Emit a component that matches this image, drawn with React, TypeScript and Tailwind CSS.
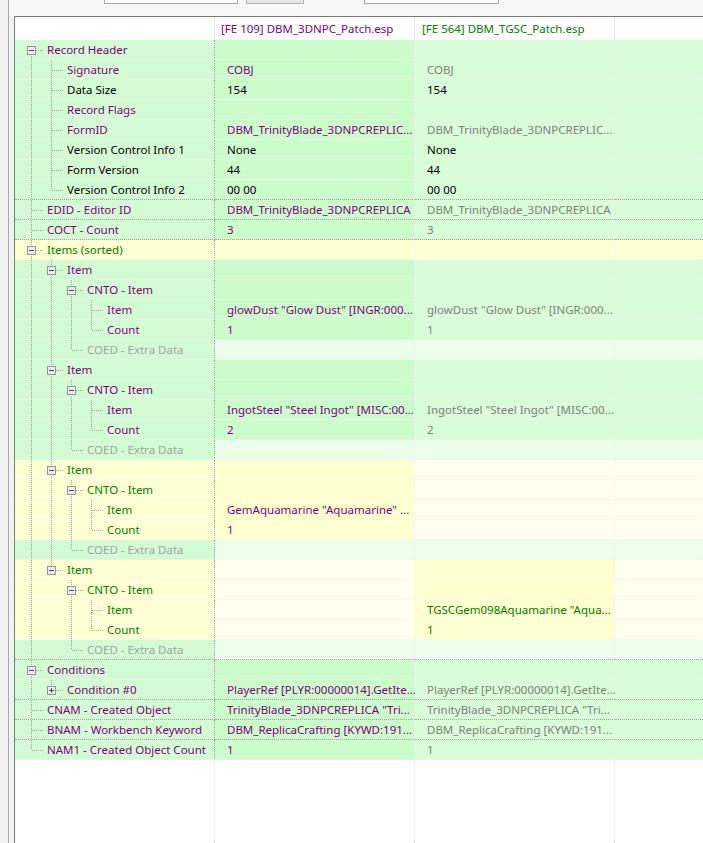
import React from 'react';

type Tone = 'p' | 'k' | 'g' | 'n' | 's';
type Band = 'G' | 'Y' | 'E' | 'Y2' | 'Y3';

interface Row {
  label: string;
  level: number;
  box?: 'minus' | 'plus';
  tone: Tone;
  band: Band;
  a?: string;
  at?: Tone;
  b?: string;
  bt?: Tone;
}

const TONE: Record<Tone, string> = {
  p: 'text-[#800080]',
  k: 'text-black',
  g: 'text-[#808080]',
  n: 'text-[#008000]',
  s: 'text-[#a3a3a3]',
};

// label, file 1, file 2, empty space on the right
const BAND: Record<Band, string[]> = {
  G: ['bg-[#d4fcd4]', 'bg-[#ccfccc]', 'bg-[#d8fdd8]', 'bg-[#d8fdd8]'],
  Y: ['bg-[#ffffd4]', 'bg-[#ffffd4]', 'bg-[#ffffd4]', 'bg-[#ffffd4]'],
  E: ['bg-[#d4fcd4]', 'bg-[#eafeea]', 'bg-[#eafeea]', 'bg-[#eafeea]'],
  Y2: ['bg-[#ffffd4]', 'bg-[#ffffd0]', 'bg-[#fffff0]', 'bg-[#fffff0]'],
  Y3: ['bg-[#ffffd4]', 'bg-[#fffff0]', 'bg-[#ffffd0]', 'bg-[#fffff0]'],
};

const TRINITY = 'DBM_TrinityBlade_3DNPCREPLIC...';

const ROWS: Row[] = [
  { label: 'Record Header', level: 0, box: 'minus', tone: 'p', band: 'G' },
  { label: 'Signature', level: 1, tone: 'p', band: 'G', a: 'COBJ', at: 'p', b: 'COBJ', bt: 'g' },
  { label: 'Data Size', level: 1, tone: 'k', band: 'G', a: '154', at: 'k', b: '154', bt: 'k' },
  { label: 'Record Flags', level: 1, tone: 'p', band: 'G' },
  { label: 'FormID', level: 1, tone: 'p', band: 'G', a: TRINITY, at: 'p', b: TRINITY, bt: 'g' },
  { label: 'Version Control Info 1', level: 1, tone: 'k', band: 'G', a: 'None', at: 'k', b: 'None', bt: 'k' },
  { label: 'Form Version', level: 1, tone: 'k', band: 'G', a: '44', at: 'k', b: '44', bt: 'k' },
  { label: 'Version Control Info 2', level: 1, tone: 'k', band: 'G', a: '00 00', at: 'k', b: '00 00', bt: 'k' },
  { label: 'EDID - Editor ID', level: 0, tone: 'p', band: 'G', a: 'DBM_TrinityBlade_3DNPCREPLICA', at: 'p', b: 'DBM_TrinityBlade_3DNPCREPLICA', bt: 'g' },
  { label: 'COCT - Count', level: 0, tone: 'p', band: 'G', a: '3', at: 'p', b: '3', bt: 'g' },
  { label: 'Items (sorted)', level: 0, box: 'minus', tone: 'n', band: 'Y' },

  { label: 'Item', level: 1, box: 'minus', tone: 'p', band: 'G' },
  { label: 'CNTO - Item', level: 2, box: 'minus', tone: 'p', band: 'G' },
  { label: 'Item', level: 3, tone: 'p', band: 'G', a: 'glowDust "Glow Dust" [INGR:000...', at: 'p', b: 'glowDust "Glow Dust" [INGR:000...', bt: 'g' },
  { label: 'Count', level: 3, tone: 'p', band: 'G', a: '1', at: 'p', b: '1', bt: 'g' },
  { label: 'COED - Extra Data', level: 2, tone: 's', band: 'E' },

  { label: 'Item', level: 1, box: 'minus', tone: 'p', band: 'G' },
  { label: 'CNTO - Item', level: 2, box: 'minus', tone: 'p', band: 'G' },
  { label: 'Item', level: 3, tone: 'p', band: 'G', a: 'IngotSteel "Steel Ingot" [MISC:00...', at: 'p', b: 'IngotSteel "Steel Ingot" [MISC:00...', bt: 'g' },
  { label: 'Count', level: 3, tone: 'p', band: 'G', a: '2', at: 'p', b: '2', bt: 'g' },
  { label: 'COED - Extra Data', level: 2, tone: 's', band: 'E' },

  { label: 'Item', level: 1, box: 'minus', tone: 'n', band: 'Y2' },
  { label: 'CNTO - Item', level: 2, box: 'minus', tone: 'n', band: 'Y2' },
  { label: 'Item', level: 3, tone: 'n', band: 'Y2', a: 'GemAquamarine "Aquamarine" ...', at: 'p' },
  { label: 'Count', level: 3, tone: 'n', band: 'Y2', a: '1', at: 'p' },
  { label: 'COED - Extra Data', level: 2, tone: 's', band: 'E' },

  { label: 'Item', level: 1, box: 'minus', tone: 'n', band: 'Y3' },
  { label: 'CNTO - Item', level: 2, box: 'minus', tone: 'n', band: 'Y3' },
  { label: 'Item', level: 3, tone: 'n', band: 'Y3', b: 'TGSCGem098Aquamarine "Aqua...', bt: 'n' },
  { label: 'Count', level: 3, tone: 'n', band: 'Y3', b: '1', bt: 'n' },
  { label: 'COED - Extra Data', level: 2, tone: 's', band: 'E' },

  { label: 'Conditions', level: 0, box: 'minus', tone: 'p', band: 'G' },
  { label: 'Condition #0', level: 1, box: 'plus', tone: 'p', band: 'G', a: 'PlayerRef [PLYR:00000014].GetIte...', at: 'p', b: 'PlayerRef [PLYR:00000014].GetIte...', bt: 'g' },
  { label: 'CNAM - Created Object', level: 0, tone: 'p', band: 'G', a: 'TrinityBlade_3DNPCREPLICA "Tri...', at: 'p', b: 'TrinityBlade_3DNPCREPLICA "Tri...', bt: 'g' },
  { label: 'BNAM - Workbench Keyword', level: 0, tone: 'p', band: 'G', a: 'DBM_ReplicaCrafting [KYWD:191...', at: 'p', b: 'DBM_ReplicaCrafting [KYWD:191...', bt: 'g' },
  { label: 'NAM1 - Created Object Count', level: 0, tone: 'p', band: 'G', a: '1', at: 'p', b: '1', bt: 'g' },
];

const isLast = (idx: number) => {
  const L = ROWS[idx].level;
  for (let j = idx + 1; j < ROWS.length; j++) {
    if (ROWS[j].level < L) return true;
    if (ROWS[j].level === L) return false;
  }
  return true;
};

const DOT = '#a0a0a0';

const TreeLines: React.FC<{ level: number; box?: 'minus' | 'plus'; first: boolean; last: boolean; open: boolean[] }> = ({
  level,
  box,
  first,
  last,
  open,
}) => {
  const x = 16 + level * 20;
  const dot = { stroke: DOT, strokeDasharray: '1 1' };
  return (
    <svg width={32 + level * 20} height={19} className="shrink-0" shapeRendering="crispEdges">
      {open.map((o, a) =>
        o ? <line key={a} x1={16 + a * 20 + 0.5} y1={0} x2={16 + a * 20 + 0.5} y2={19} {...dot} /> : null
      )}
      {!first && <line x1={x + 0.5} y1={0} x2={x + 0.5} y2={10} {...dot} />}
      {!last && <line x1={x + 0.5} y1={10} x2={x + 0.5} y2={19} {...dot} />}
      <line x1={x + 1} y1={10.5} x2={x + 12} y2={10.5} {...dot} />
      {box && (
        <g>
          <rect x={x - 3.5} y={6.5} width={8} height={8} fill="#ececec" stroke="#959595" />
          <line x1={x - 2} y1={10.5} x2={x + 3} y2={10.5} stroke="#3b4a78" />
          {box === 'plus' && <line x1={x + 0.5} y1={8} x2={x + 0.5} y2={13} stroke="#3b4a78" />}
        </g>
      )}
    </svg>
  );
};

const Toolbar: React.FC = () => (
  <div className="h-[16px] flex items-start bg-[#f7f7f7] overflow-hidden">
    <div className="ml-[95px] w-[134px] h-[4px] bg-white border border-t-0 border-[#a8a8a8]" />
    <div className="ml-[8px] w-[58px] h-[4px] bg-[#e6e6e6] border border-t-0 border-[#b4b4b4]" />
    <div className="ml-[60px] w-[135px] h-[4px] bg-white border border-t-0 border-[#a8a8a8]" />
  </div>
);

const App: React.FC = () => {
  return (
    <div className="w-[703px] h-[843px] flex bg-[#f2f2f2] overflow-hidden text-[11.5px] font-['Noto_Sans',sans-serif]">
      {/* left splitter strip */}
      <div className="w-[8px] shrink-0 bg-[#f0f0f0]" />
      <div className="w-px shrink-0 bg-[#a9a9a9]" />

      <div className="flex-1 flex flex-col min-w-0">
        <Toolbar />
        <div className="flex-1 flex min-h-0">
          <div className="w-[5px] shrink-0" />
          <div className="flex-1 flex flex-col bg-white border-l border-t border-[#7a7a7a] min-w-0">
            {/* column headers */}
            <div className="h-[23px] flex shrink-0">
              <div className="w-[200px] shrink-0 border-r border-[#e5e5e5]" />
              <div className="w-[200px] shrink-0 border-r border-[#e5e5e5] pl-[6px] flex items-center text-[#800080] whitespace-nowrap">
                [FE 109] DBM_3DNPC_Patch.esp
              </div>
              <div className="w-[200px] shrink-0 border-r border-[#e5e5e5] pl-[7px] flex items-center text-[#008000] whitespace-nowrap">
                [FE 564] DBM_TGSC_Patch.esp
              </div>
              <div className="flex-1" />
            </div>

            {/* record rows */}
            {ROWS.map((r, i) => {
              const open: boolean[] = [];
              for (let a = 0; a < r.level; a++) {
                let k = i - 1;
                while (k >= 0 && ROWS[k].level !== a) k--;
                open.push(k >= 0 && !isLast(k));
              }
              const next = ROWS[i + 1];
              const bottom = next && next.level === 0 ? 'border-b-[#a0a0a0]' : 'border-b-[#f2f2f2]';
              const bg = BAND[r.band];
              return (
                <div key={i} className="h-[20px] flex shrink-0 leading-[19px]">
                  <div className={`w-[200px] shrink-0 flex border-b border-r border-dotted border-r-[#a0a0a0] ${bottom} ${bg[0]}`}>
                    <TreeLines level={r.level} box={r.box} first={i === 0} last={isLast(i)} open={open} />
                    <span className={`whitespace-nowrap ${TONE[r.tone]}`}>{r.label}</span>
                  </div>
                  <div className={`w-[200px] shrink-0 pl-[12px] border-b border-r border-dotted border-r-[#f0f0f0] ${bottom} ${bg[1]}`}>
                    <div className={`whitespace-nowrap ${r.at ? TONE[r.at] : ''}`}>{r.a}</div>
                  </div>
                  <div className={`w-[200px] shrink-0 pl-[12px] border-b border-r border-dotted border-r-[#f0f0f0] ${bottom} ${bg[2]}`}>
                    <div className={`whitespace-nowrap ${r.bt ? TONE[r.bt] : ''}`}>{r.b}</div>
                  </div>
                  <div className={`flex-1 border-b border-dotted ${bottom} ${bg[3]}`} />
                </div>
              );
            })}

            {/* empty area below the tree */}
            <div className="flex-1 flex">
              <div className="w-[200px] shrink-0 border-r border-dotted border-[#dcdcdc]" />
              <div className="w-[200px] shrink-0 border-r border-dotted border-[#dcdcdc]" />
              <div className="w-[200px] shrink-0 border-r border-dotted border-[#dcdcdc]" />
              <div className="flex-1" />
            </div>
          </div>
        </div>
      </div>
    </div>
  );
};

export default App;
